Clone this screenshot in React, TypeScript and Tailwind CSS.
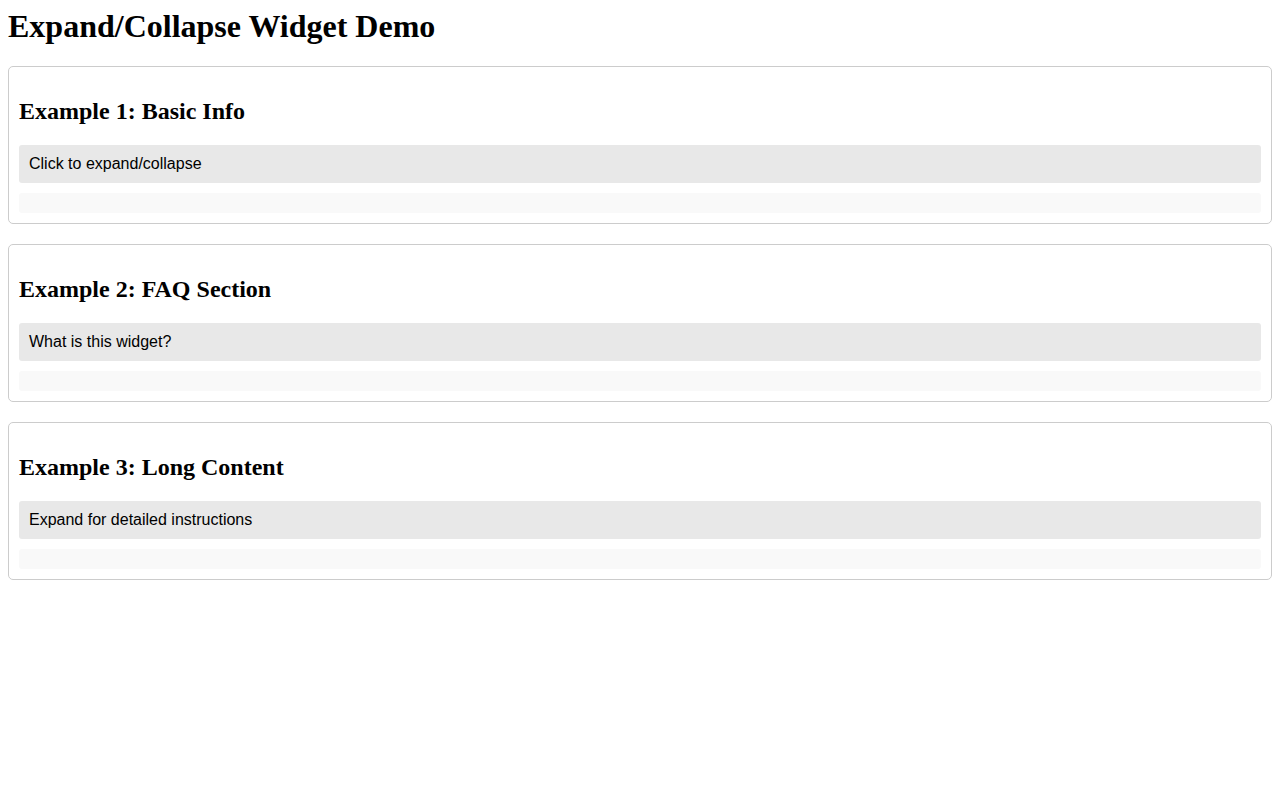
import { useState } from "react";

type Item = {
  title: string;
  header: string;
  body: string[];
};

const items: Item[] = [
  {
    title: "Example 1: Basic Info",
    header: "Click to expand/collapse",
    body: ["This is some basic information that can be shown or hidden."],
  },
  {
    title: "Example 2: FAQ Section",
    header: "What is this widget?",
    body: ["It is a simple expand/collapse widget that toggles the visibility of its content."],
  },
  {
    title: "Example 3: Long Content",
    header: "Expand for detailed instructions",
    body: [
      "Step 1: Click the header to reveal the content.",
      "Step 2: Read the instructions.",
      "Step 3: Click the header again to hide it.",
    ],
  },
];

function Collapsible({ item }: { item: Item }) {
  const [open, setOpen] = useState(false);
  return (
    <div className="border border-[#ccc] rounded-[5px] p-[10px] mb-5">
      <h2 className="text-[24px] font-bold leading-[28px] my-5 font-['Liberation_Serif',serif]">
        {item.title}
      </h2>
      <div
        className="bg-[#e8e8e8] p-[10px] rounded-[3px] cursor-pointer text-[16px] leading-[18px] font-['Liberation_Sans',Arial,sans-serif]"
        onClick={() => setOpen((v) => !v)}
      >
        {item.header}
      </div>
      <div className="mt-[10px] p-[10px] bg-[#f9f9f9] rounded-[3px] text-[16px] leading-[normal] font-['Liberation_Sans',Arial,sans-serif]">
        {open &&
          item.body.map((line, i) => (
            <p key={i} className="my-1">
              {line}
            </p>
          ))}
      </div>
    </div>
  );
}

export default function App() {
  return (
    <div className="p-2 bg-white text-black min-h-screen font-['Liberation_Serif',serif]">
      <h1 className="text-[32px] font-bold leading-[normal] mb-[21.44px]">
        Expand/Collapse Widget Demo
      </h1>
      {items.map((item) => (
        <Collapsible key={item.title} item={item} />
      ))}
    </div>
  );
}
